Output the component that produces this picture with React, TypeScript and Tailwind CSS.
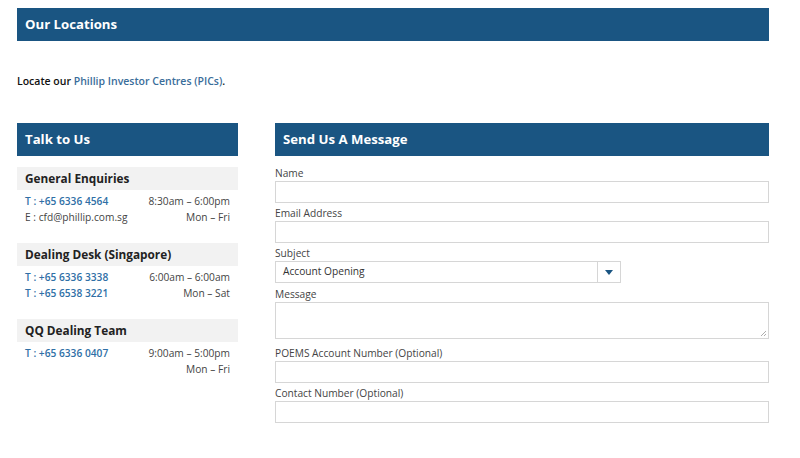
import React from "react";

const font = { fontFamily: '"Open Sans", "Noto Sans", sans-serif' };

function Group({ title, rows }: { title: string; rows: { l: React.ReactNode; r: string }[] }) {
  return (
    <div className="mb-[17px]">
      <div className="h-[23px] bg-[#f2f2f2] pl-[8px] flex items-center text-[11.8px] font-bold text-[#222]">{title}</div>
      <div className="pt-[4px] pl-[8px] pr-[8px]">
        {rows.map((row, i) => (
          <div key={i} className="flex justify-between h-[16px] items-center text-[10.2px] text-[#444]">
            <span>{row.l}</span>
            <span>{row.r}</span>
          </div>
        ))}
      </div>
    </div>
  );
}

const Tel = ({ n }: { n: string }) => <span className="font-semibold text-[#2f6fa6]">T : {n}</span>;

function Field({ label, children, className = "" }: { label: string; children: React.ReactNode; className?: string }) {
  return (
    <div className={"mb-[2px] " + className}>
      <div className="text-[10.2px] text-[#444] h-[16px] leading-[16px]">{label}</div>
      {children}
    </div>
  );
}

const Input = () => <div className="h-[22px] border border-[#d6d6d6] bg-white" />;

export default function App() {
  return (
    <div style={font} className="w-[800px] h-[458px] bg-white pt-[8px] px-[17px] text-[#333]">
      <div className="w-[752px] h-[33px] bg-[#1a5582] text-white text-[13.2px] font-bold flex items-center pl-[8px]">Our Locations</div>
      <div className="mt-[30px] text-[10.5px] font-semibold text-[#111] h-[20px] leading-[20px]">
        Locate our <span className="text-[#3a6d9a]">Phillip Investor Centres (PICs)</span>.
      </div>
      <div className="mt-[32px] flex gap-[37px]">
        <div className="w-[221px]">
          <div className="h-[33px] bg-[#1a5582] text-white text-[13.2px] font-bold flex items-center pl-[8px]">Talk to Us</div>
          <div className="mt-[11px]">
            <Group title="General Enquiries" rows={[
              { l: <Tel n="+65 6336 4564" />, r: "8:30am – 6:00pm" },
              { l: "E : cfd@phillip.com.sg", r: "Mon – Fri" },
            ]} />
            <Group title="Dealing Desk (Singapore)" rows={[
              { l: <Tel n="+65 6336 3338" />, r: "6:00am – 6:00am" },
              { l: <Tel n="+65 6538 3221" />, r: "Mon – Sat" },
            ]} />
            <Group title="QQ Dealing Team" rows={[
              { l: <Tel n="+65 6336 0407" />, r: "9:00am – 5:00pm" },
              { l: "", r: "Mon – Fri" },
            ]} />
          </div>
        </div>
        <div className="w-[494px]">
          <div className="h-[33px] bg-[#1a5582] text-white text-[13.2px] font-bold flex items-center pl-[8px]">Send Us A Message</div>
          <div className="mt-[9px]">
            <Field label="Name"><Input /></Field>
            <Field label="Email Address"><Input /></Field>
            <Field label="Subject" className="mb-[3px]">
              <div className="w-[346px] h-[22px] border border-[#d6d6d6] flex items-center">
                <span className="flex-1 pl-[7px] text-[10.2px] text-[#333]">Account Opening</span>
                <div className="w-[23px] h-full border-l border-[#d6d6d6] flex items-center justify-center">
                  <svg width="8" height="5" viewBox="0 0 8 5"><path d="M0 0h8L4 5z" fill="#1a5582" /></svg>
                </div>
              </div>
            </Field>
            <Field label="Message" className="mb-[6px]">
              <div className="h-[37px] border border-[#d6d6d6] relative">
                <svg className="absolute right-[1px] bottom-[1px]" width="7" height="7" viewBox="0 0 7 7">
                  <path d="M6 1L1 6M6 4L4 6" stroke="#999" strokeWidth="0.8" />
                </svg>
              </div>
            </Field>
            <Field label="POEMS Account Number (Optional)"><Input /></Field>
            <Field label="Contact Number (Optional)"><Input /></Field>
          </div>
        </div>
      </div>
    </div>
  );
}
